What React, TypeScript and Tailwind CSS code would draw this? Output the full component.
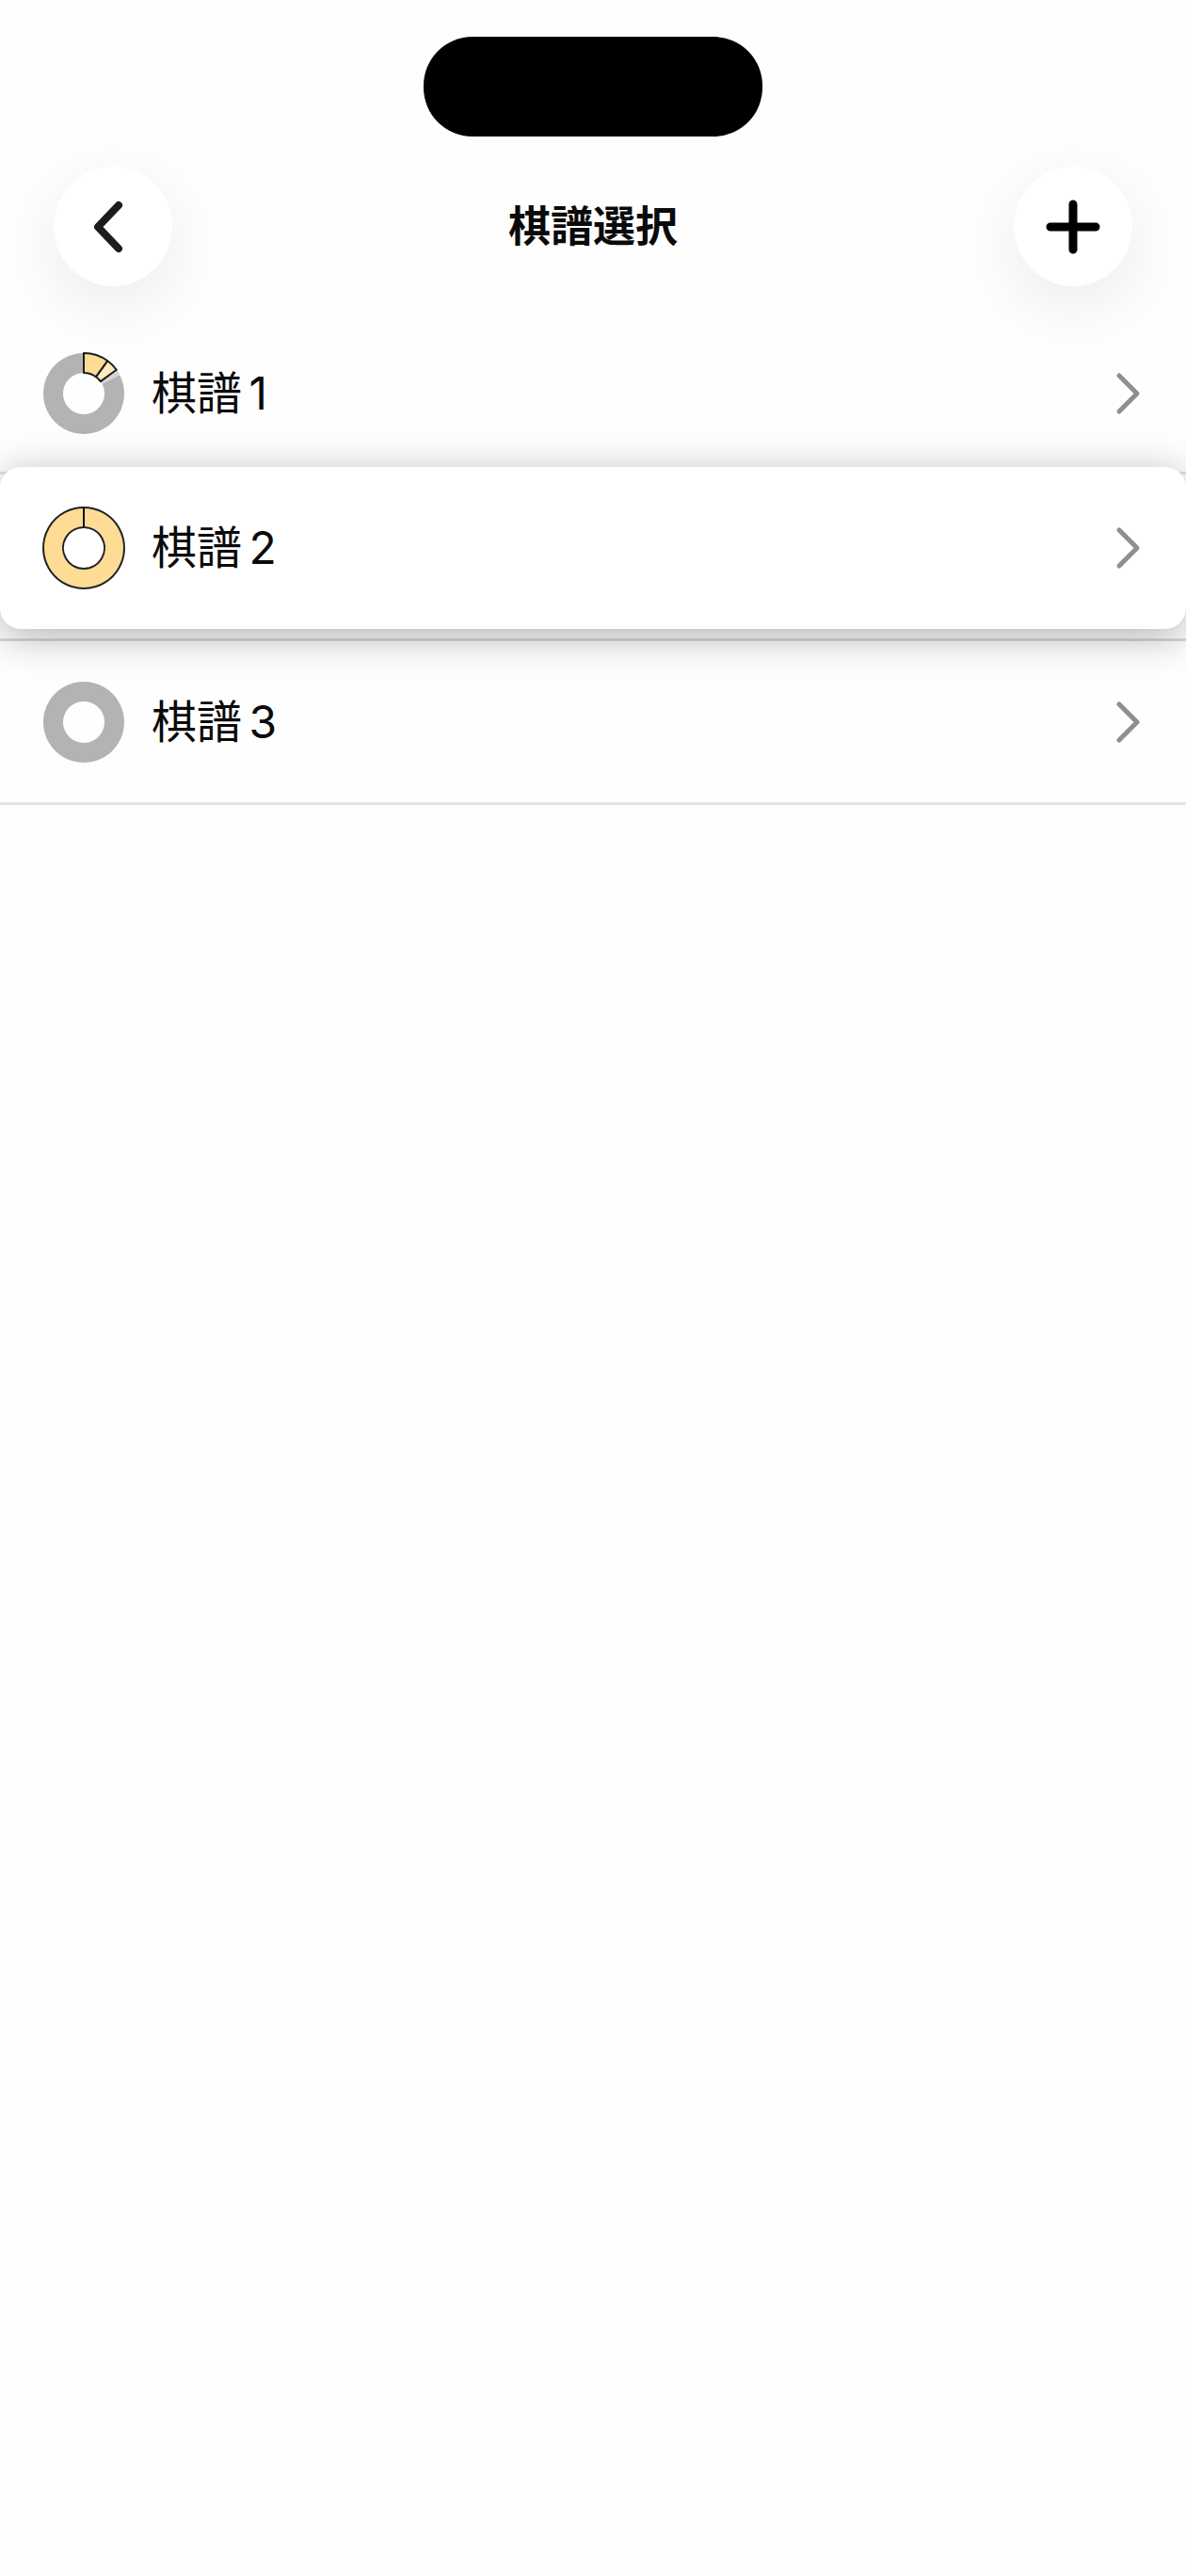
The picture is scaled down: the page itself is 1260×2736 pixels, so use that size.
const polar = (r: number, a: number) => {
  const t = (a * Math.PI) / 180;
  return `${(45 + r * Math.sin(t)).toFixed(3)} ${(45 - r * Math.cos(t)).toFixed(3)}`;
};

const R = 43;
const I = 22;

const seg = (a: number, b: number) => {
  const large = b - a > 180 ? 1 : 0;
  return `M${polar(I, a)} L${polar(R, a)} A${R} ${R} 0 ${large} 1 ${polar(R, b)} L${polar(I, b)} A${I} ${I} 0 ${large} 0 ${polar(I, a)} Z`;
};

const ring = `M45 2 A43 43 0 1 1 44.99 2 Z M45 23 A22 22 0 1 0 45.01 23 Z`;

function Donut({ kind }: { kind: 1 | 2 | 3 }) {
  return (
    <svg viewBox="0 0 90 90" className="h-[90px] w-[90px] shrink-0">
      {kind === 2 ? (
        <>
          <path d={ring} fill="#ffdc96" fillRule="evenodd" stroke="#222222" strokeWidth="2" />
          <path d="M45 2 L45 23" stroke="#111111" strokeWidth="2" />
        </>
      ) : (
        <path d={ring} fill="#b3b3b3" fillRule="evenodd" />
      )}
      {kind === 1 && (
        <>
          <path d={seg(54, 63)} fill="#d6d6d6" />
          <path d={seg(36, 54)} fill="#ffe8bc" stroke="#1c1c1c" strokeWidth="2" strokeLinejoin="round" />
          <path d={seg(0, 36)} fill="#ffdc96" stroke="#1c1c1c" strokeWidth="2" strokeLinejoin="round" />
        </>
      )}
    </svg>
  );
}

function Chevron() {
  return (
    <svg viewBox="0 0 30 46" className="h-[46px] w-[30px] shrink-0" fill="none">
      <path d="M6 4 L25 23 L6 42" stroke="#8e8e93" strokeWidth="5" strokeLinecap="round" strokeLinejoin="round" />
    </svg>
  );
}

function RowContent({ kind, label }: { kind: 1 | 2 | 3; label: string }) {
  return (
    <>
      <div className="flex items-center gap-[27px]">
        <Donut kind={kind} />
        <span className="text-[48px] leading-none font-normal text-[#0a0a0a] [word-spacing:-6px]">{label}</span>
      </div>
      <Chevron />
    </>
  );
}

export default function App() {
  return (
    <div className="min-h-[2736px] w-[1260px] bg-[#fefefe] font-['Inter','Noto_Sans_CJK_JP',sans-serif]">
      <div className="pt-[39px]">
        <div className="mx-auto h-[106px] w-[360px] rounded-[52px] bg-black" />
      </div>

      <header className="mt-[32px] flex h-[127px] items-center justify-between px-[57px]">
        <button className="flex h-[127px] w-[126px] items-center justify-center rounded-full bg-white shadow-[0_20px_70px_rgba(0,0,0,0.08)]">
          <svg viewBox="0 0 40 60" className="mr-[8px] h-[60px] w-[40px]" fill="none">
            <path d="M30 7 L8 30 L30 53" stroke="#1c1c1c" strokeWidth="8" strokeLinecap="round" strokeLinejoin="round" />
          </svg>
        </button>
        <h1 className="text-[45px] leading-none font-bold text-[#0a0a0a]">棋譜選択</h1>
        <button className="flex h-[127px] w-[126px] items-center justify-center rounded-full bg-white shadow-[0_20px_70px_rgba(0,0,0,0.08)]">
          <svg viewBox="0 0 60 60" className="h-[60px] w-[60px]" fill="none">
            <path d="M30 6 V54 M6 30 H54" stroke="#000" strokeWidth="9" strokeLinecap="round" />
          </svg>
        </button>
      </header>

      <ul className="mt-[30px]">
        <li className="flex h-[170px] items-center justify-between border-b-[3px] border-[#e4e4e4] pr-[47px] pl-[44px]">
          <RowContent kind={1} label="棋譜 1" />
        </li>
        <li className="h-[177px] border-b-[3px] border-[#d9d9d9]">
          <div className="relative -top-[8px] z-10 flex h-[172px] items-center justify-between rounded-[22px] bg-white pr-[47px] pl-[44px] shadow-[0_8px_44px_rgba(0,0,0,0.3)]">
            <RowContent kind={2} label="棋譜 2" />
          </div>
        </li>
        <li className="flex h-[174px] items-center justify-between border-b-[3px] border-[#e4e4e4] pr-[47px] pl-[44px]">
          <RowContent kind={3} label="棋譜 3" />
        </li>
      </ul>
    </div>
  );
}
